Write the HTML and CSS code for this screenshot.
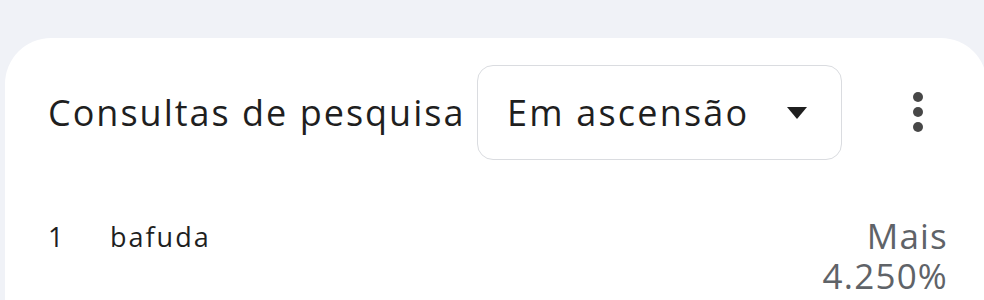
FILE: index.html
```html
<!DOCTYPE html>
<html lang="pt">
<head>
<meta charset="utf-8">
<link rel="stylesheet" href="styles.css">
</head>
<body>
<div class="page">
  <section class="card">
    <header class="head">
      <h2 class="title">Consultas de pesquisa</h2>
      <button class="select">
        <span class="select-label">Em ascensão</span>
        <svg class="caret" width="20" height="12" viewBox="0 0 20 12"><path d="M0 0H20L10 12Z" fill="#1f1f1f"/></svg>
      </button>
      <button class="more" aria-label="Mais opções">
        <svg width="12" height="44" viewBox="0 0 12 44"><circle cx="6" cy="6" r="5" fill="#474747"/><circle cx="6" cy="21" r="5" fill="#474747"/><circle cx="6" cy="36" r="5" fill="#474747"/></svg>
      </button>
    </header>
    <div class="row">
      <span class="rank">1</span>
      <span class="term">bafuda</span>
      <span class="value">Mais<br>4.250%</span>
    </div>
  </section>
</div>
</body>
</html>
```
FILE: styles.css
```css
html, body {
  margin: 0;
  padding: 0;
  background: #f0f2f7;
  overflow: hidden;
}
.page {
  padding: 38px 0 0 5px;
  height: 300px;
  box-sizing: border-box;
  overflow: hidden;
}
.card {
  background: #fff;
  width: 982px;
  height: 262px;
  border-radius: 46px 46px 0 0;
  box-sizing: border-box;
  padding: 27px 0 0 43px;
  font-family: "Open Sans", "Noto Sans", sans-serif;
  color: #1f1f1f;
}
.head {
  display: flex;
  align-items: center;
}
.title {
  margin: 0;
  font-weight: 400;
  font-size: 36px;
  width: 417px;
  white-space: nowrap;
  letter-spacing: 2px;
}
.select {
  margin-left: 12px;
  width: 365px;
  height: 95px;
  box-sizing: border-box;
  border: 1.5px solid #dadce0;
  border-radius: 16px;
  background: #fff;
  display: flex;
  align-items: center;
  padding: 0 0 0 29px;
  font-family: inherit;
  color: #1f1f1f;
}
.select-label {
  font-size: 36px;
  letter-spacing: 2.2px;
  width: 280px;
  text-align: left;
  white-space: nowrap;
}
.more {
  margin-left: 70px;
  border: 0;
  background: none;
  padding: 0;
  width: 12px;
  height: 44px;
  display: flex;
}
.row {
  display: flex;
  align-items: flex-start;
  margin-top: 58px;
  padding-right: 39px;
}
.rank {
  font-size: 27px;
  width: 62px;
  line-height: 38px;
}
.term {
  font-size: 27px;
  letter-spacing: 2px;
  line-height: 38px;
  flex: 1;
}
.value {
  font-size: 35px;
  letter-spacing: 1.2px;
  line-height: 40px;
  margin-top: -2px;
  text-align: right;
  color: #5f6368;
}
```
